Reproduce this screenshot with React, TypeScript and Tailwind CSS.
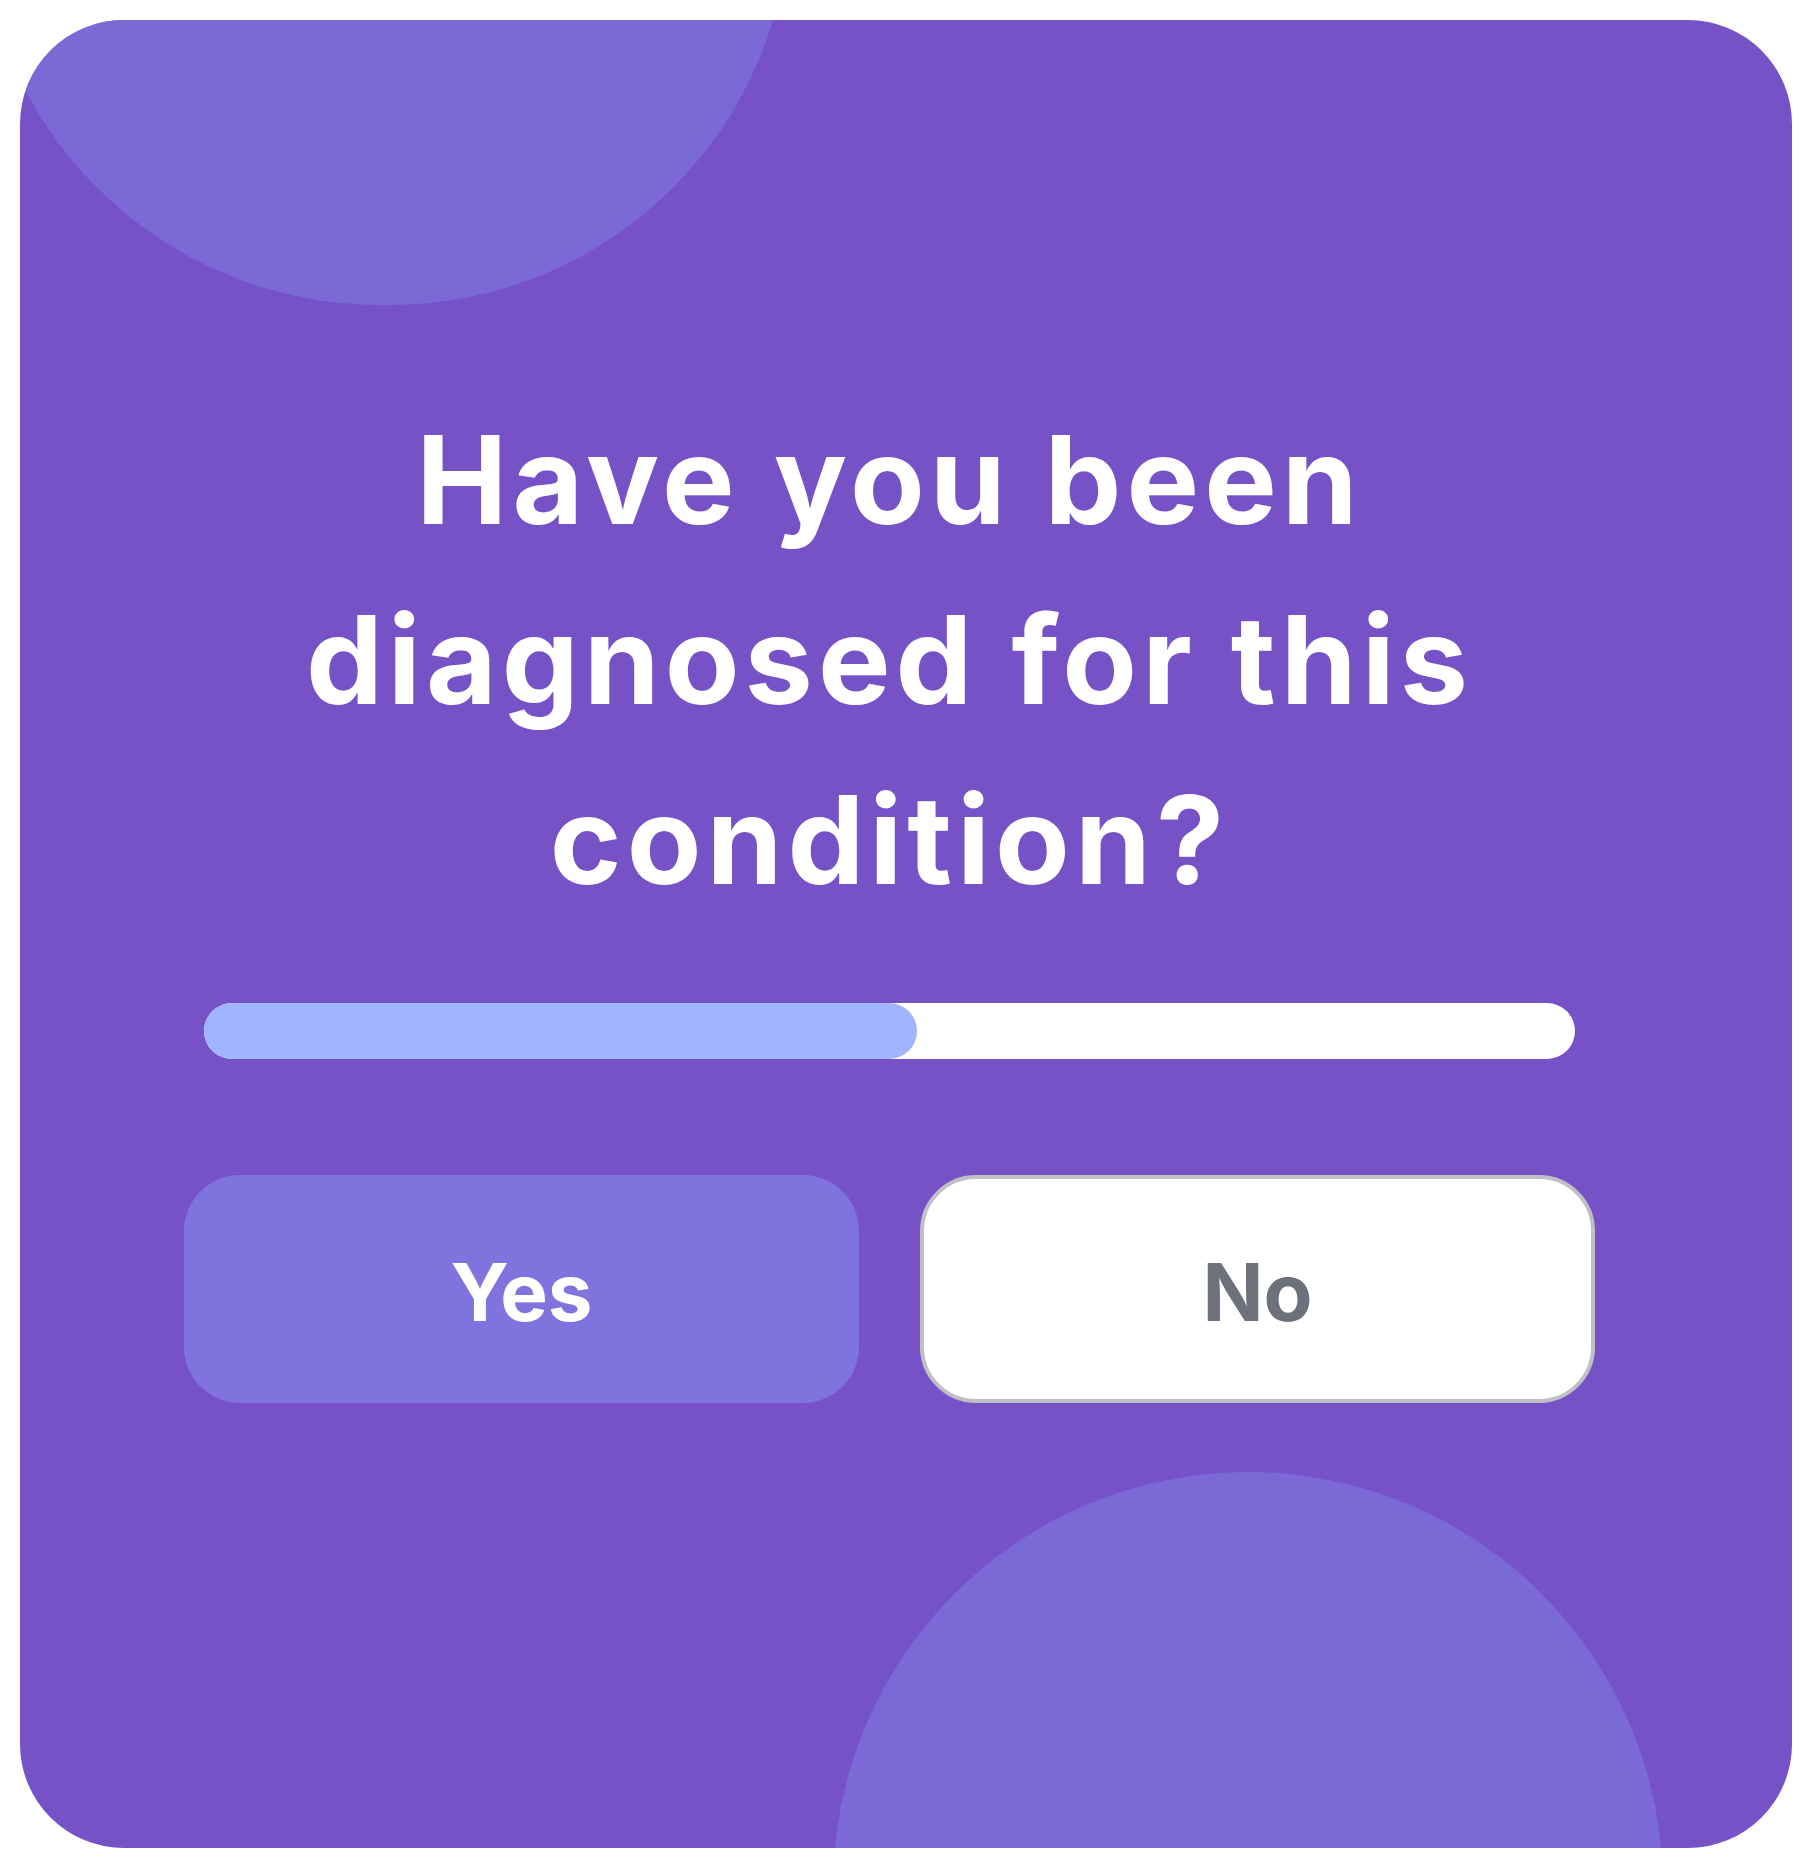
import React, { useState } from "react";

const progress = 52;

export default function App() {
  const [answer, setAnswer] = useState<"yes" | "no" | null>(null);

  return (
    <div className="min-h-screen bg-white p-[20px] font-['Inter','Lato',sans-serif]">
      <div className="relative overflow-hidden rounded-[104px] bg-[#7752c6] h-[1828px]">
        {/* decorative blobs */}
        <div className="absolute left-[-40px] top-[-515px] h-[800px] w-[810px] rounded-full bg-[#7b69d6]" />
        <div className="absolute left-[813px] top-[1452px] h-[830px] w-[830px] rounded-full bg-[#7b69d6]" />

        <div className="relative ml-[164px] mr-[197px] pt-[370px]">
          <h1 className="text-center text-[122px] font-bold leading-[180px] tracking-[5px] text-white">
            Have you been
            <br />
            diagnosed for this
            <br />
            condition?
          </h1>

          <div className="mx-[20px] mt-[73px] h-[56px] rounded-full bg-white">
            <div
              className="h-full rounded-full bg-[#a0b4ff]"
              style={{ width: `${progress}%` }}
            />
          </div>

          <div className="mt-[116px] grid grid-cols-2 gap-[61px]">
            <button
              onClick={() => setAnswer("yes")}
              className="flex h-[228px] items-center justify-center rounded-[56px] bg-[#7f74dd] pt-[6px] text-[80px] font-bold text-white"
            >
              Yes
            </button>
            <button
              onClick={() => setAnswer("no")}
              className={
                "flex h-[228px] items-center justify-center rounded-[56px] border-4 border-[#bfc0c6] bg-white pt-[6px] text-[80px] font-bold text-[#6d717b]" +
                (answer === "no" ? " shadow-none" : "")
              }
            >
              No
            </button>
          </div>
        </div>
      </div>
    </div>
  );
}
